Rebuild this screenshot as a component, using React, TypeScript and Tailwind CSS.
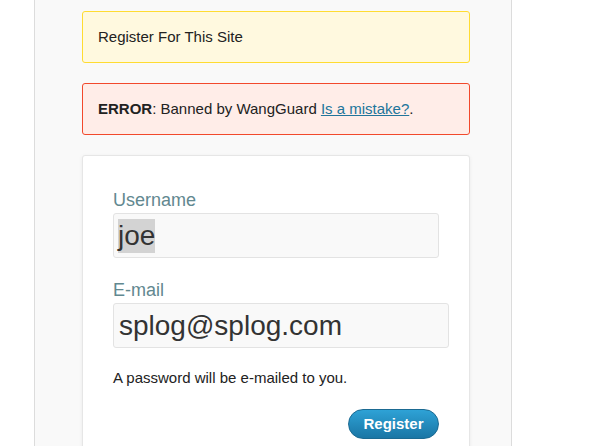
export default function App() {
    return (
        <div className="min-h-[446px] bg-white font-['Liberation_Sans',Arial,sans-serif]">
            <div className="ml-[34px] w-[478px] min-h-[446px] border-x border-[#dcdcdc] bg-[#f9f9f9] pl-[47px] pt-[11px]">
                {/* Message */}
                <div className="w-[388px] rounded-[3px] border border-[#ffdc32] bg-[#fff9df] px-[15px] py-[15px] text-[15px] leading-[20px] text-[#222]">
                    Register For This Site
                </div>

                {/* Error */}
                <div className="mt-[20px] w-[388px] rounded-[3px] border border-[#f2492c] bg-[#ffede8] px-[15px] py-[15px] text-[15px] leading-[20px] text-[#222]">
                    <strong className="font-bold">ERROR</strong>: Banned by WangGuard{' '}
                    <a href="#" className="text-[#21759b] underline">Is a mistake?</a>.
                </div>

                {/* Register form */}
                <div className="mt-[20px] w-[388px] rounded-[3px] border border-[#e6e6e6] bg-white pl-[30px] pr-[30px] pt-[32px] pb-[20px] shadow-[0_1px_4px_rgba(0,0,0,0.06)]">
                    <div className="text-[18px] leading-[24px] text-[#628890]">Username</div>
                    <div className="mt-[1px] flex h-[45px] w-[326px] items-center rounded-[3px] border border-[#e3e3e3] bg-[#f9f9f9] pl-[4px] text-[28px] text-[#333]">
                        <span className="bg-[#d3d3d3] leading-[34px]">joe</span>
                    </div>

                    <div className="mt-[20px] text-[18px] leading-[24px] text-[#628890]">E-mail</div>
                    <div className="mt-[1px] flex h-[45px] w-[336px] items-center rounded-[3px] border border-[#e3e3e3] bg-[#f9f9f9] pl-[5px] text-[28px] leading-[34px] text-[#333]">
                        splog@splog.com
                    </div>

                    <p className="mt-[20px] text-[15px] leading-[20px] text-[#222]">A password will be e-mailed to you.</p>

                    <div className="mt-[21px] flex justify-end">
                        <button className="h-[30px] w-[91px] rounded-full border border-[#1b6a92] bg-gradient-to-b from-[#2ea2d6] to-[#1a76a5] text-[15px] font-bold text-white">
                            Register
                        </button>
                    </div>
                </div>
            </div>
        </div>
    );
}
